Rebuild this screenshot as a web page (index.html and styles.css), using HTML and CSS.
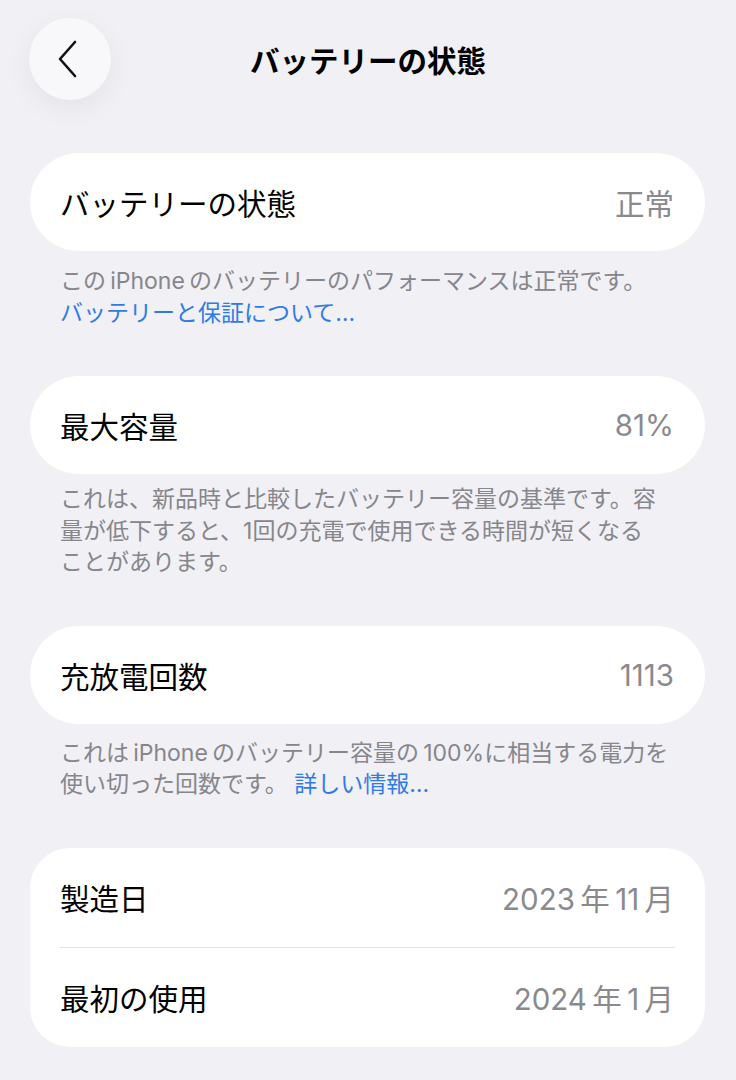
FILE: index.html
```html
<!DOCTYPE html>
<html lang="ja">
<head>
  <meta charset="UTF-8">
  <title>バッテリーの状態</title>
  <link rel="stylesheet" href="styles.css">
</head>
<body>
  <header class="nav">
    <button class="back" aria-label="戻る">
      <svg width="24" height="40" viewBox="0 0 24 40">
        <path d="M19 3 L4 20 L19 37" fill="none" stroke="#111" stroke-width="2.6" stroke-linecap="round" stroke-linejoin="round"/>
      </svg>
    </button>
    <h1 class="title">バッテリーの状態</h1>
    <span></span>
  </header>

  <main class="content">
    <section class="group">
      <div class="card">
        <div class="row"><span class="label">バッテリーの状態</span><span class="value">正常</span></div>
      </div>
      <p class="note first">この&#8201;iPhone&#8201;のバッテリーのパフォーマンスは正常です。<br><a href="#">バッテリーと保証について…</a></p>
    </section>

    <section class="group">
      <div class="card">
        <div class="row"><span class="label">最大容量</span><span class="value">81%</span></div>
      </div>
      <p class="note tight">これは、新品時と比較したバッテリー容量の基準です。容<br>量が低下すると、1回の充電で使用できる時間が短くなる<br>ことがあります。</p>
    </section>

    <section class="group">
      <div class="card">
        <div class="row"><span class="label">充放電回数</span><span class="value">1113</span></div>
      </div>
      <p class="note">これは&#8201;iPhone&#8201;のバッテリー容量の&#8201;100%に相当する電力を<br>使い切った回数です。 <a href="#">詳しい情報…</a></p>
    </section>

    <section class="group">
      <div class="card list">
        <div class="row"><span class="label">製造日</span><span class="value">2023&#8201;年&#8201;11&#8201;月</span></div>
        <div class="row"><span class="label">最初の使用</span><span class="value">2024&#8201;年&#8201;1&#8201;月</span></div>
      </div>
    </section>
  </main>
</body>
</html>
```

FILE: styles.css
```css
body {
  margin: 0;
  background-color: #f0f0f5;
  font-family: "Inter", "Noto Sans CJK JP", sans-serif;
  color: #000;
}

.nav {
  display: grid;
  grid-template-columns: 1fr auto 1fr;
  align-items: center;
  padding: 18px 29px 0;
}

.back {
  width: 82px;
  height: 82px;
  border: none;
  border-radius: 50%;
  background-color: #f8f8fb;
  box-shadow: 0 8px 28px rgba(0, 0, 0, 0.06);
  display: flex;
  align-items: center;
  justify-content: center;
  padding: 0 4px 0 0;
  cursor: pointer;
}

.title {
  margin: 0;
  font-size: 29.5px;
  font-weight: 700;
}

.content {
  padding: 53px 31px 0 30px;
}

.group {
  margin-bottom: 47px;
}

.card {
  background-color: #fff;
  border-radius: 49px;
}

.list {
  border-radius: 40px;
}

.row {
  display: flex;
  justify-content: space-between;
  align-items: center;
  height: 98px;
  padding: 0 31px 0 30px;
  font-size: 29.5px;
}

.list .row {
  height: 99px;
}

.list .row + .row {
  border-top: 1px solid #e2e2e6;
  margin: 0 30px;
  padding: 0 1px 0 0;
}

.value {
  color: #8a8a8e;
}

.note {
  margin: 0;
  padding: 14px 20px 0 30px;
  font-size: 23px;
  line-height: 31.5px;
  color: #86868b;
  white-space: nowrap;
}

.note.first {
  padding-top: 15px;
}

.note.tight {
  padding-top: 10px;
}

.note a {
  color: #2f7be6;
  text-decoration: none;
}
```
